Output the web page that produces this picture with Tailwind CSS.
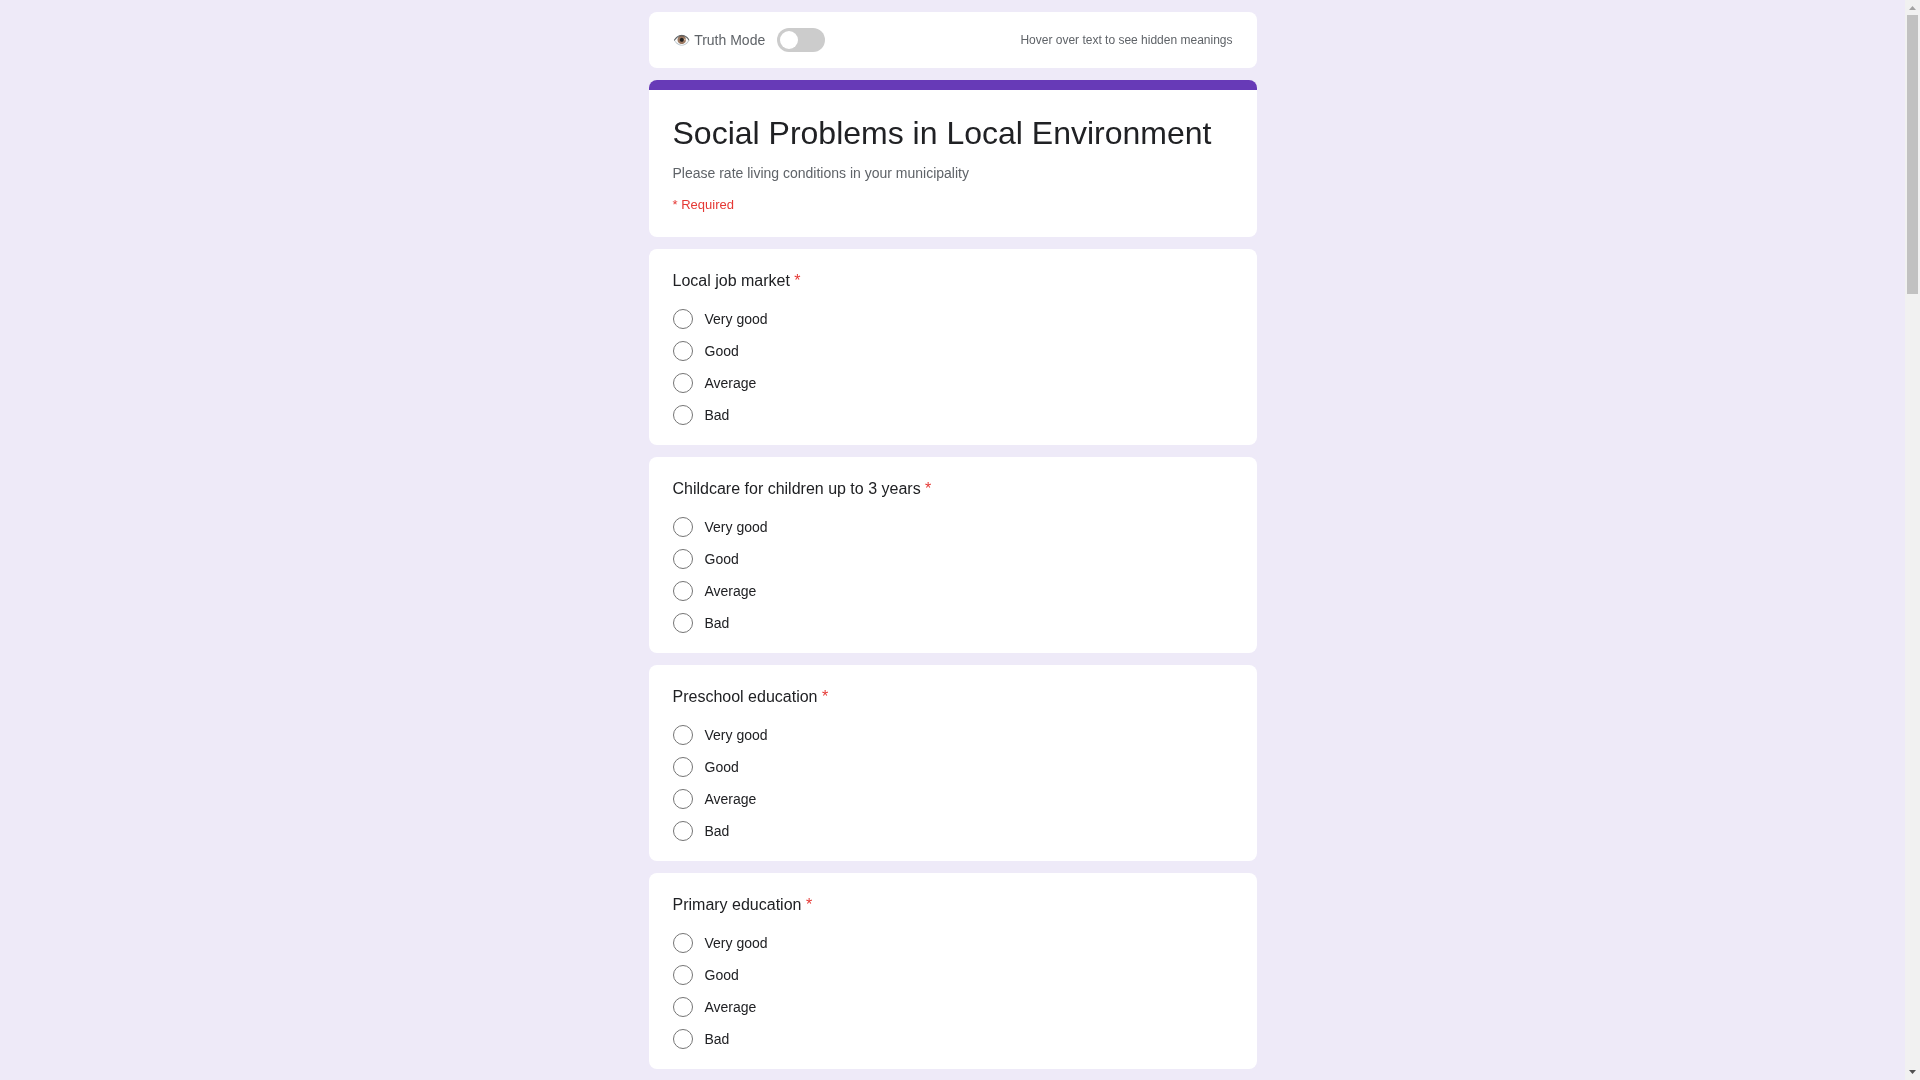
<!DOCTYPE html>
<html lang="en">
  <head>
    <meta charset="UTF-8" />
    <meta name="viewport" content="width=device-width, initial-scale=1.0" />
    <title>Social Problems in Local Environment</title>
    <script src="https://cdn.jsdelivr.net/npm/@tailwindcss/browser@4"></script>
  </head>
  <body class="flex h-screen overflow-hidden bg-[#eeeaf8] font-['Liberation_Sans',Arial,sans-serif] text-[#202124]">
    <main class="flex-1 will-change-transform">
      <div class="mx-auto max-w-[640px] px-4 pt-3">
        <!-- Truth mode bar -->
        <div class="mb-3 flex items-center justify-between rounded-lg bg-white px-6 py-4">
          <div class="flex items-center gap-3">
            <span class="text-sm text-[#5f6368]"><span class="mr-px">👁️</span> Truth Mode</span>
            <span class="relative h-6 w-12 rounded-full bg-[#ccc]">
              <span class="absolute top-[3px] left-[3px] h-[18px] w-[18px] rounded-full bg-white"></span>
            </span>
          </div>
          <span class="text-xs text-[#5f6368]">Hover over text to see hidden meanings</span>
        </div>

        <!-- Header -->
        <div class="mb-3 overflow-hidden rounded-lg bg-white">
          <div class="h-2.5 bg-[#673ab7]"></div>
          <div class="px-6 pt-6 pb-[22px]">
            <h1 class="mb-[11px] text-[32px] leading-[38px] font-normal">Social Problems in Local Environment</h1>
            <p class="mb-3 text-sm text-[#5f6368]">Please rate living conditions in your municipality</p>
            <p class="text-[13px] text-[#e53935]">* Required</p>
          </div>
        </div>

        <!-- Questions -->
        <div class="mb-3 rounded-lg bg-white px-6 pt-[21px] pb-5">
          <div class="mb-[17px] text-base leading-[22px]">Local job market <span class="text-[#e53935]">*</span></div>
          <div class="flex flex-col gap-3">
            <label class="flex items-center gap-3 text-sm leading-5"><input type="radio" name="q1" class="h-5 w-5 appearance-none rounded-full border border-[#757575]" />Very good</label>
            <label class="flex items-center gap-3 text-sm leading-5"><input type="radio" name="q1" class="h-5 w-5 appearance-none rounded-full border border-[#757575]" />Good</label>
            <label class="flex items-center gap-3 text-sm leading-5"><input type="radio" name="q1" class="h-5 w-5 appearance-none rounded-full border border-[#757575]" />Average</label>
            <label class="flex items-center gap-3 text-sm leading-5"><input type="radio" name="q1" class="h-5 w-5 appearance-none rounded-full border border-[#757575]" />Bad</label>
          </div>
        </div>
        <div class="mb-3 rounded-lg bg-white px-6 pt-[21px] pb-5">
          <div class="mb-[17px] text-base leading-[22px]">Childcare for children up to 3 years <span class="text-[#e53935]">*</span></div>
          <div class="flex flex-col gap-3">
            <label class="flex items-center gap-3 text-sm leading-5"><input type="radio" name="q2" class="h-5 w-5 appearance-none rounded-full border border-[#757575]" />Very good</label>
            <label class="flex items-center gap-3 text-sm leading-5"><input type="radio" name="q2" class="h-5 w-5 appearance-none rounded-full border border-[#757575]" />Good</label>
            <label class="flex items-center gap-3 text-sm leading-5"><input type="radio" name="q2" class="h-5 w-5 appearance-none rounded-full border border-[#757575]" />Average</label>
            <label class="flex items-center gap-3 text-sm leading-5"><input type="radio" name="q2" class="h-5 w-5 appearance-none rounded-full border border-[#757575]" />Bad</label>
          </div>
        </div>
        <div class="mb-3 rounded-lg bg-white px-6 pt-[21px] pb-5">
          <div class="mb-[17px] text-base leading-[22px]">Preschool education <span class="text-[#e53935]">*</span></div>
          <div class="flex flex-col gap-3">
            <label class="flex items-center gap-3 text-sm leading-5"><input type="radio" name="q3" class="h-5 w-5 appearance-none rounded-full border border-[#757575]" />Very good</label>
            <label class="flex items-center gap-3 text-sm leading-5"><input type="radio" name="q3" class="h-5 w-5 appearance-none rounded-full border border-[#757575]" />Good</label>
            <label class="flex items-center gap-3 text-sm leading-5"><input type="radio" name="q3" class="h-5 w-5 appearance-none rounded-full border border-[#757575]" />Average</label>
            <label class="flex items-center gap-3 text-sm leading-5"><input type="radio" name="q3" class="h-5 w-5 appearance-none rounded-full border border-[#757575]" />Bad</label>
          </div>
        </div>
        <div class="mb-3 rounded-lg bg-white px-6 pt-[21px] pb-5">
          <div class="mb-[17px] text-base leading-[22px]">Primary education <span class="text-[#e53935]">*</span></div>
          <div class="flex flex-col gap-3">
            <label class="flex items-center gap-3 text-sm leading-5"><input type="radio" name="q4" class="h-5 w-5 appearance-none rounded-full border border-[#757575]" />Very good</label>
            <label class="flex items-center gap-3 text-sm leading-5"><input type="radio" name="q4" class="h-5 w-5 appearance-none rounded-full border border-[#757575]" />Good</label>
            <label class="flex items-center gap-3 text-sm leading-5"><input type="radio" name="q4" class="h-5 w-5 appearance-none rounded-full border border-[#757575]" />Average</label>
            <label class="flex items-center gap-3 text-sm leading-5"><input type="radio" name="q4" class="h-5 w-5 appearance-none rounded-full border border-[#757575]" />Bad</label>
          </div>
        </div>
      </div>
    </main>

    <!-- Scrollbar -->
    <aside class="flex h-full w-[15px] flex-col items-center bg-[#f1f1f1]">
      <svg class="mt-[6px] h-[4px] w-[7px]" viewBox="0 0 7 4"><path d="M3.5 0 L7 4 L0 4 Z" fill="#a3a3a3" /></svg>
      <div class="mt-[5px] h-[279px] w-[11px] bg-[#c1c1c1]"></div>
      <svg class="mt-auto mb-[6px] h-[4px] w-[7px]" viewBox="0 0 7 4"><path d="M0 0 L7 0 L3.5 4 Z" fill="#505050" /></svg>
    </aside>
  </body>
</html>
